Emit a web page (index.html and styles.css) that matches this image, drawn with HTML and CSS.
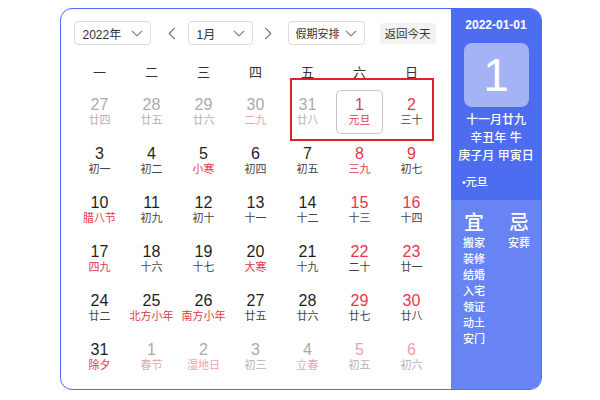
FILE: index.html
```html
<!DOCTYPE html>
<html lang="zh">
<head>
<meta charset="utf-8">
<title>万年历</title>
<link rel="stylesheet" href="styles.css">
</head>
<body>
<div class="card">
  <div class="main">
    <div class="toolbar">
      <div class="select sel-year"><span>2022年</span><svg class="chev" viewBox="0 0 12 7"><path d="M1 1l5 5 5-5"/></svg></div>
      <svg class="arrow arrow-l" viewBox="0 0 8 14"><path d="M7 1L1 7l6 6"/></svg>
      <div class="select sel-month"><span>1月</span><svg class="chev" viewBox="0 0 12 7"><path d="M1 1l5 5 5-5"/></svg></div>
      <svg class="arrow arrow-r" viewBox="0 0 8 14"><path d="M1 1l6 6-6 6"/></svg>
      <div class="select sel-hol"><span>假期安排</span><svg class="chev" viewBox="0 0 12 7"><path d="M1 1l5 5 5-5"/></svg></div>
      <div class="btn-today">返回今天</div>
    </div>
    <div class="weekdays">
      <span>一</span><span>二</span><span>三</span><span>四</span><span>五</span><span>六</span><span>日</span>
    </div>
    <div class="grid">
      <div class="day other"><b>27</b><i>廿四</i></div>
      <div class="day other"><b>28</b><i>廿五</i></div>
      <div class="day other"><b>29</b><i>廿六</i></div>
      <div class="day other"><b>30</b><i class="lr">二九</i></div>
      <div class="day other"><b>31</b><i>廿八</i></div>
      <div class="day sel"><b class="r">1</b><i class="r">元旦</i></div>
      <div class="day"><b class="r">2</b><i>三十</i></div>

      <div class="day"><b>3</b><i>初一</i></div>
      <div class="day"><b>4</b><i>初二</i></div>
      <div class="day"><b>5</b><i class="r">小寒</i></div>
      <div class="day"><b>6</b><i>初四</i></div>
      <div class="day"><b>7</b><i>初五</i></div>
      <div class="day"><b class="r">8</b><i class="r">三九</i></div>
      <div class="day"><b class="r">9</b><i>初七</i></div>

      <div class="day"><b>10</b><i class="r">腊八节</i></div>
      <div class="day"><b>11</b><i>初九</i></div>
      <div class="day"><b>12</b><i>初十</i></div>
      <div class="day"><b>13</b><i>十一</i></div>
      <div class="day"><b>14</b><i>十二</i></div>
      <div class="day"><b class="r">15</b><i>十三</i></div>
      <div class="day"><b class="r">16</b><i>十四</i></div>

      <div class="day"><b>17</b><i class="r">四九</i></div>
      <div class="day"><b>18</b><i>十六</i></div>
      <div class="day"><b>19</b><i>十七</i></div>
      <div class="day"><b>20</b><i class="r">大寒</i></div>
      <div class="day"><b>21</b><i>十九</i></div>
      <div class="day"><b class="r">22</b><i>二十</i></div>
      <div class="day"><b class="r">23</b><i>廿一</i></div>

      <div class="day"><b>24</b><i>廿二</i></div>
      <div class="day"><b>25</b><i class="r">北方小年</i></div>
      <div class="day"><b>26</b><i class="r">南方小年</i></div>
      <div class="day"><b>27</b><i>廿五</i></div>
      <div class="day"><b>28</b><i>廿六</i></div>
      <div class="day"><b class="r">29</b><i>廿七</i></div>
      <div class="day"><b class="r">30</b><i>廿八</i></div>

      <div class="day"><b>31</b><i class="r">除夕</i></div>
      <div class="day other"><b>1</b><i class="lr">春节</i></div>
      <div class="day other"><b>2</b><i class="lr">湿地日</i></div>
      <div class="day other"><b>3</b><i>初三</i></div>
      <div class="day other"><b>4</b><i class="lr">立春</i></div>
      <div class="day other"><b class="lr">5</b><i>初五</i></div>
      <div class="day other"><b class="lr">6</b><i>初六</i></div>
    </div>
  </div>
  <aside class="side">
    <div class="side-top">
      <div class="side-date">2022-01-01</div>
      <div class="side-big">1</div>
      <div class="side-lunar">十一月廿九</div>
      <div class="side-lunar">辛丑年 牛</div>
      <div class="side-lunar">庚子月 甲寅日</div>
      <div class="side-fest">•元旦</div>
    </div>
    <div class="side-bottom">
      <div class="yj">
        <div class="yj-title">宜</div>
        <div class="yj-item">搬家</div>
        <div class="yj-item">装修</div>
        <div class="yj-item">结婚</div>
        <div class="yj-item">入宅</div>
        <div class="yj-item">领证</div>
        <div class="yj-item">动土</div>
        <div class="yj-item">安门</div>
      </div>
      <div class="yj">
        <div class="yj-title">忌</div>
        <div class="yj-item">安葬</div>
      </div>
    </div>
  </aside>
  <div class="mark"></div>
</div>
</body>
</html>
```

FILE: styles.css
```css
* { box-sizing: border-box; }
html, body { margin: 0; padding: 0; background: #fff; }
body {
  font-family: "Liberation Sans", "Noto Sans CJK SC", sans-serif;
  color: #222;
}
.card {
  position: relative;
  margin: 8px 0 0 60px;
  width: 482px;
  height: 382px;
  border: 1.5px solid #4d6cf0;
  border-radius: 12px;
  overflow: hidden;
  display: flex;
}
.main {
  flex: 1;
  padding: 12px 0 0 12.5px;
}
.toolbar {
  display: flex;
  align-items: center;
  height: 24px;
}
.select {
  height: 24px;
  border: 1px solid #dcdcdc;
  border-radius: 4px;
  display: flex;
  align-items: center;
  justify-content: space-between;
  padding: 0 7px 0 8px;
  font-size: 12px;
  color: #333;
  white-space: nowrap;
}
.sel-year { width: 77px; }
.sel-month { width: 65px; }
.sel-hol { width: 77px; padding-left: 7px; font-size: 11px; }
.chev {
  width: 12px;
  height: 7px;
  flex: 0 0 12px;
  fill: none;
  stroke: #8a8a8a;
  stroke-width: 1.2;
}
.arrow {
  width: 8px;
  height: 13px;
  fill: none;
  stroke: #777;
  stroke-width: 1.3;
}
.arrow-l { margin: 0 12px 0 17px; }
.arrow-r { margin: 0 16px 0 11px; }
.btn-today {
  margin-left: 15px;
  height: 21px;
  width: 56px;
  background: #f2f2f2;
  border-radius: 3px;
  font-size: 11.5px;
  color: #333;
  white-space: nowrap;
  display: flex;
  align-items: center;
  justify-content: center;
}
.weekdays {
  margin-top: 14.5px;
  display: grid;
  grid-template-columns: repeat(7, 52px);
  height: 24px;
  align-items: center;
  justify-items: center;
  font-size: 13px;
  color: #333;
}
.grid {
  margin-top: 4px;
  display: grid;
  grid-template-columns: repeat(7, 52px);
  grid-auto-rows: 49px;
}
.day {
  margin: 2.5px;
  border: 1px solid transparent;
  border-radius: 5px;
  display: flex;
  flex-direction: column;
  align-items: center;
  justify-content: center;
}
.day b {
  font-weight: 400;
  font-size: 16px;
  line-height: 17px;
  color: #1e1e1e;
}
.day i {
  font-style: normal;
  font-size: 11px;
  line-height: 15px;
  color: #444;
  white-space: nowrap;
}
.day .r { color: #e2384b; }
.day.other b { color: #ababab; }
.day.other i { color: #b3b3b3; }
.day .lr, .day.other .lr { color: #f1a2ac; }
.day.sel { border-color: #c4c4cc; }
.side {
  flex: 0 0 90px;
  display: flex;
  flex-direction: column;
  color: #fff;
}
.side-top {
  height: 191px;
  background: #4d6cf0;
  display: flex;
  flex-direction: column;
  align-items: center;
  padding-top: 7.5px;
}
.side-date {
  font-size: 12px;
  font-weight: 700;
  line-height: 16px;
}
.side-big {
  margin-top: 10px;
  width: 65px;
  height: 64px;
  border-radius: 8px;
  background: #a3b3f6;
  font-size: 46px;
  line-height: 64px;
  text-align: center;
  font-weight: 400;
}
.side-big + .side-lunar { margin-top: 4px; }
.side-lunar {
  font-size: 12px;
  font-weight: 500;
  line-height: 18px;
}
.side-fest {
  align-self: flex-start;
  margin: 8px 0 0 11px;
  font-size: 11px;
  font-weight: 500;
  line-height: 18px;
}
.side-bottom {
  flex: 1;
  background: #6883f4;
  display: flex;
  padding: 11px 0 0 12px;
  gap: 23px;
}
.yj {
  display: flex;
  flex-direction: column;
  align-items: center;
}
.yj-title {
  font-size: 20px;
  line-height: 24px;
  font-weight: 500;
}
.yj-item {
  font-size: 11px;
  font-weight: 500;
  line-height: 16px;
}
.mark {
  position: absolute;
  left: 228.5px;
  top: 68.5px;
  width: 144px;
  height: 63px;
  border: 2px solid #e0202a;
}
```
